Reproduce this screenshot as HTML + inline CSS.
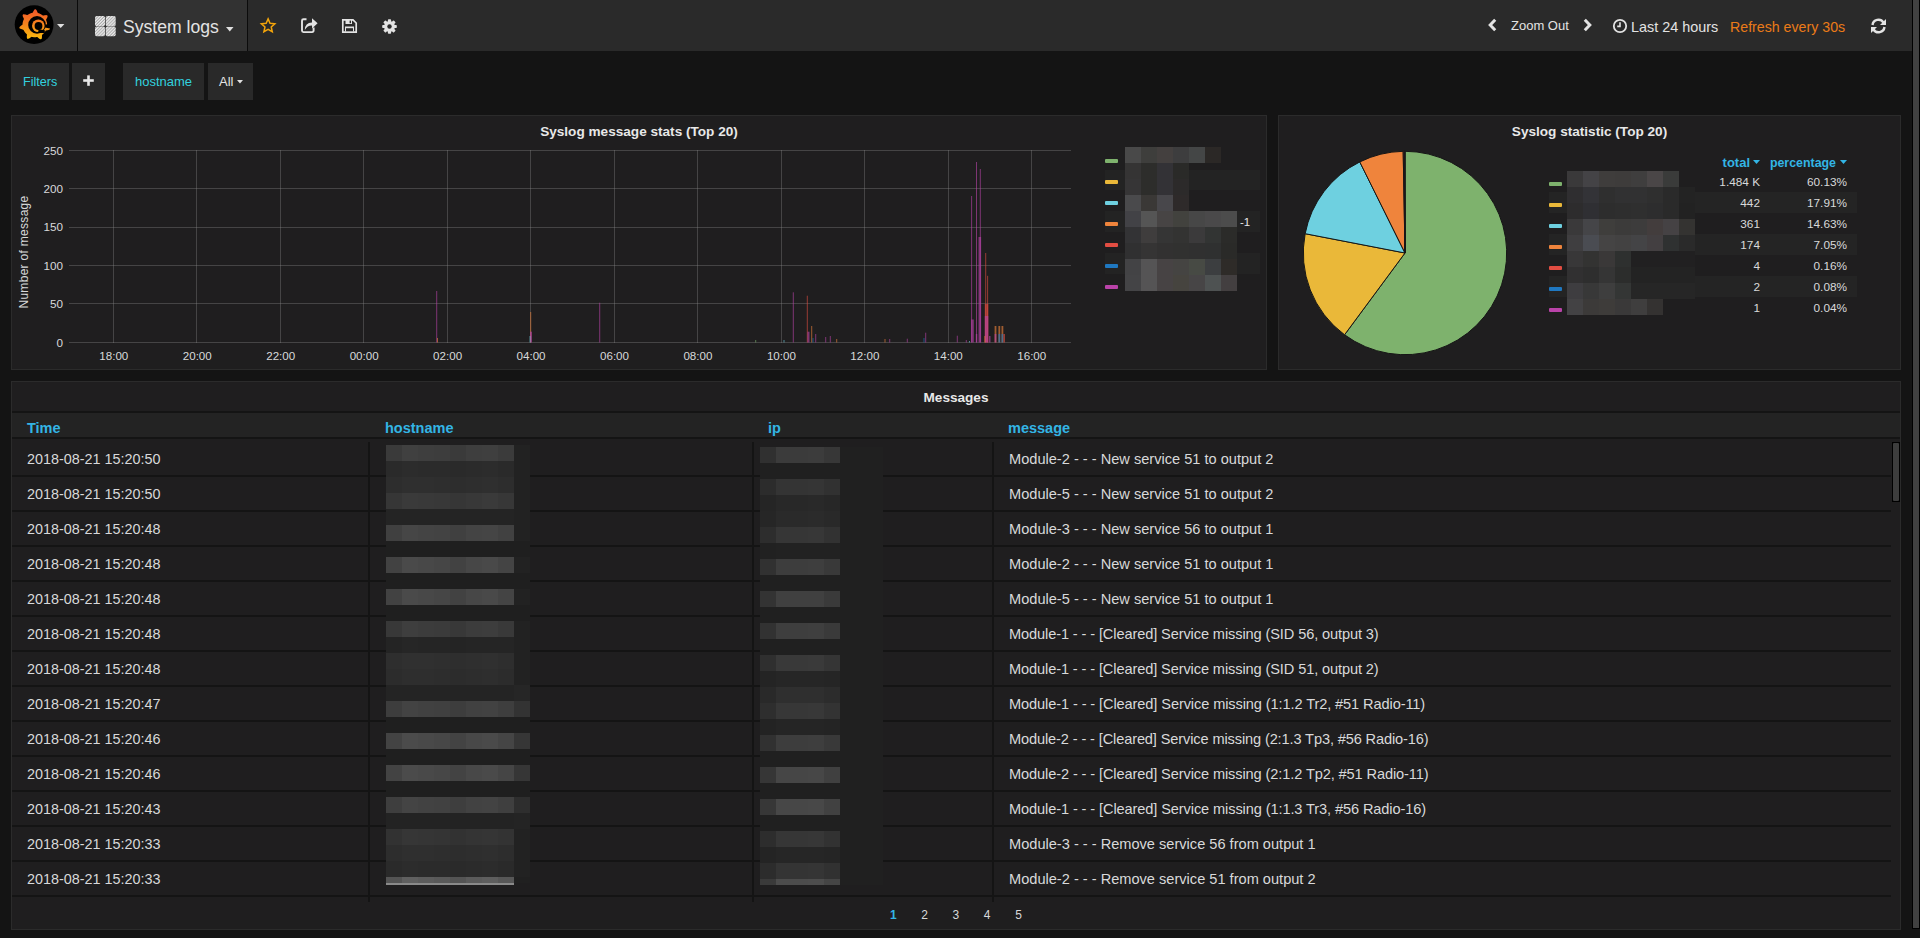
<!DOCTYPE html>
<html><head><meta charset="utf-8"><title>System logs - Grafana</title>
<style>
html,body{margin:0;padding:0;width:1920px;height:938px;overflow:hidden;background:#141414;font-family:"Liberation Sans", sans-serif;}
body>div,body>svg{position:absolute;box-sizing:content-box;}
</style></head><body>
<div style="left:0px;top:0px;width:1912px;height:51px;background:#2a2a2a;"></div>
<div style="left:0px;top:0px;width:77px;height:51px;background:#323232;"></div>
<div style="left:77px;top:0px;width:1px;height:51px;background:#0b0b0b;"></div>
<div style="left:78px;top:0px;width:169px;height:51px;background:#323232;"></div>
<div style="left:247px;top:0px;width:1px;height:51px;background:#0b0b0b;"></div>
<svg style="left:0;top:0" width="70" height="50" viewBox="0 0 70 50">
<defs><linearGradient id="lg" x1="0" y1="8" x2="0" y2="41" gradientUnits="userSpaceOnUse"><stop offset="0" stop-color="#f0512b"/><stop offset="0.45" stop-color="#f57f1e"/><stop offset="1" stop-color="#fcc30c"/></linearGradient></defs>
<circle cx="34.1" cy="24.6" r="19.4" fill="#000"/>
<polygon points="47.10,24.90 47.09,25.27 47.28,25.65 47.75,26.07 48.34,26.53 48.95,27.03 49.47,27.56 49.84,28.10 50.00,28.61 49.92,29.07 49.60,29.47 49.08,29.78 48.39,30.00 47.63,30.16 46.87,30.27 46.20,30.39 45.73,30.57 45.54,30.89 45.36,31.21 45.17,31.52 44.96,31.83 44.75,32.13 44.53,32.42 44.30,32.71 44.06,32.99 43.82,33.27 43.56,33.53 43.30,33.79 43.03,34.04 42.75,34.28 42.47,34.52 42.18,34.74 42.00,35.13 41.97,35.75 41.97,36.50 41.95,37.29 41.87,38.03 41.68,38.65 41.38,39.10 40.97,39.32 40.46,39.32 39.89,39.10 39.29,38.71 38.69,38.21 38.12,37.68 37.62,37.23 37.18,36.98 36.81,37.03 36.45,37.09 36.09,37.13 35.72,37.17 35.35,37.19 34.98,37.20 34.62,37.20 34.25,37.19 33.88,37.17 33.51,37.13 33.15,37.09 32.79,37.03 32.42,36.97 32.06,36.89 31.71,36.80 31.29,36.90 30.78,37.27 30.20,37.74 29.57,38.22 28.94,38.61 28.34,38.85 27.80,38.89 27.37,38.71 27.05,38.32 26.87,37.73 26.80,37.02 26.82,36.24 26.88,35.47 26.91,34.79 26.84,34.29 26.57,34.04 26.30,33.79 26.04,33.53 25.78,33.27 25.54,32.99 25.30,32.71 25.07,32.42 24.85,32.13 24.64,31.83 24.43,31.52 24.24,31.21 24.06,30.89 23.88,30.57 23.72,30.24 23.56,29.90 23.23,29.64 22.62,29.47 21.89,29.31 21.13,29.12 20.43,28.87 19.86,28.55 19.49,28.15 19.37,27.70 19.48,27.21 19.82,26.70 20.34,26.20 20.96,25.73 21.60,25.30 22.15,24.90 22.49,24.53 22.52,24.16 22.55,23.80 22.59,23.43 22.64,23.07 22.70,22.70 22.77,22.34 22.85,21.98 22.94,21.63 23.05,21.27 23.16,20.92 23.28,20.58 23.42,20.24 23.56,19.90 23.72,19.56 23.88,19.23 23.88,18.81 23.63,18.23 23.30,17.56 22.98,16.84 22.74,16.14 22.63,15.49 22.71,14.96 22.99,14.58 23.44,14.36 24.05,14.31 24.77,14.41 25.52,14.60 26.26,14.82 26.91,15.01 27.41,15.05 27.72,14.84 28.02,14.63 28.33,14.44 28.65,14.25 28.97,14.07 29.30,13.90 29.63,13.74 29.97,13.59 30.31,13.45 30.65,13.32 31.00,13.20 31.35,13.09 31.71,13.00 32.06,12.91 32.42,12.83 32.75,12.56 33.05,12.01 33.37,11.33 33.73,10.63 34.13,10.00 34.57,9.52 35.03,9.25 35.50,9.23 35.96,9.45 36.38,9.90 36.75,10.51 37.07,11.22 37.35,11.94 37.62,12.57 37.90,12.98 38.25,13.09 38.60,13.20 38.95,13.32 39.29,13.45 39.63,13.59 39.97,13.74 40.30,13.90 40.63,14.07 40.95,14.25 41.27,14.44 41.58,14.63 41.88,14.84 42.18,15.06 42.47,15.28 42.75,15.52 43.17,15.61 43.79,15.50 44.52,15.33 45.29,15.17 46.03,15.09 46.68,15.13 47.18,15.33 47.49,15.68 47.60,16.17 47.51,16.78 47.26,17.45 46.91,18.15 46.52,18.82 46.20,19.41 46.05,19.89 46.18,20.24 46.32,20.58 46.44,20.92 46.55,21.27 46.66,21.63 46.75,21.98 46.83,22.34 46.90,22.70 46.96,23.07 47.01,23.43 47.05,23.80 47.08,24.16 47.09,24.53" fill="url(#lg)"/>
<circle cx="37.0" cy="24.9" r="8.8" fill="#000"/>
<path d="M45.2 24.6 L50 24.2 L50 28.5 L45 27.6 Z" fill="#000"/>
<circle cx="38.3" cy="25.8" r="6.3" fill="url(#lg)"/>
<circle cx="38.5" cy="26.0" r="3.9" fill="#000"/>
<path d="M38.6 29.2 L44.8 30.2 L44.8 33 L38 33 Z" fill="#000"/>
</svg>
<svg style="left:57px;top:24px" width="8" height="5"><path d="M0 0 L7.4 0 L3.7 4 Z" fill="#e0e0e0"/></svg>
<svg style="left:94px;top:15px" width="23" height="23" viewBox="0 0 23 23">
<defs><pattern id="hatch" width="2.2" height="2.2" patternUnits="userSpaceOnUse" patternTransform="rotate(45)"><rect width="2.2" height="2.2" fill="#a9a9a9"/><rect width="1.2" height="2.2" fill="#ececec"/></pattern></defs>
<rect x="1" y="1" width="10" height="10.2" rx="1.6" fill="url(#hatch)"/>
<rect x="11.7" y="1" width="10" height="10.2" rx="1.6" fill="url(#hatch)"/>
<rect x="1" y="11.6" width="10" height="9.6" rx="1.6" fill="url(#hatch)"/>
<rect x="11.7" y="11.6" width="10" height="9.6" rx="1.6" fill="url(#hatch)"/>
</svg>
<div style="left:123px;top:17px;line-height:20px;font-size:17.6px;color:#e3e3e3;font-weight:normal;white-space:nowrap;">System logs</div>
<svg style="left:226px;top:27px" width="8" height="5"><path d="M0 0 L7.5 0 L3.75 4.5 Z" fill="#e0e0e0"/></svg>
<svg style="left:259px;top:17px" width="18" height="18" viewBox="0 0 18 18"><polygon points="9.10,1.90 11.04,6.33 15.85,6.81 12.24,10.02 13.27,14.74 9.10,12.30 4.93,14.74 5.96,10.02 2.35,6.81 7.16,6.33" fill="none" stroke="#f3a40b" stroke-width="1.5" stroke-linejoin="miter"/></svg>
<svg style="left:300px;top:17px" width="19" height="17" viewBox="0 0 19 17">
<path d="M6.5 2.3 H3.5 Q2 2.3 2 3.8 V13.6 Q2 15.1 3.5 15.1 H12 Q13.6 15.1 13.6 13.6 V10.5" fill="none" stroke="#e3e3e3" stroke-width="1.9"/>
<path d="M4.8 13 Q5 5.8 12 5.6 V1.2 L17.6 6.3 L12 11.4 V8.6 Q7.6 8.4 4.8 13 Z" fill="#e3e3e3"/>
</svg>
<svg style="left:341px;top:18px" width="17" height="16" viewBox="0 0 17 16">
<path d="M1.8 1.8 H12 L15.2 5 V14.2 H1.8 Z" fill="none" stroke="#e3e3e3" stroke-width="1.7"/>
<rect x="4.5" y="2" width="6.5" height="4" fill="#e3e3e3"/>
<rect x="8.6" y="2.6" width="1.4" height="2.6" fill="#2a2a2a"/>
<rect x="4" y="8.5" width="9" height="5" fill="#e3e3e3"/>
<rect x="5" y="10.2" width="7" height="3" fill="#2a2a2a"/>
</svg>
<svg style="left:382px;top:19px" width="15" height="15" viewBox="0 0 15 15"><rect x="5.9" y="0.2" width="3.2" height="14.6" rx="0.8" fill="#e3e3e3" transform="rotate(0 7.5 7.5)"/><rect x="5.9" y="0.2" width="3.2" height="14.6" rx="0.8" fill="#e3e3e3" transform="rotate(45 7.5 7.5)"/><rect x="5.9" y="0.2" width="3.2" height="14.6" rx="0.8" fill="#e3e3e3" transform="rotate(90 7.5 7.5)"/><rect x="5.9" y="0.2" width="3.2" height="14.6" rx="0.8" fill="#e3e3e3" transform="rotate(135 7.5 7.5)"/><circle cx="7.5" cy="7.5" r="5.4" fill="#e3e3e3"/><circle cx="7.5" cy="7.5" r="2.2" fill="#2a2a2a"/></svg>
<svg style="left:1487px;top:18px" width="11" height="14" viewBox="0 0 11 14"><path d="M8.2 1.8 L3.2 7 L8.2 12.2" fill="none" stroke="#e3e3e3" stroke-width="3"/></svg>
<div style="left:1511px;top:18px;line-height:15px;font-size:13px;color:#e3e3e3;font-weight:normal;white-space:nowrap;">Zoom Out</div>
<svg style="left:1582px;top:18px" width="11" height="14" viewBox="0 0 11 14"><path d="M2.8 1.8 L7.8 7 L2.8 12.2" fill="none" stroke="#e3e3e3" stroke-width="3"/></svg>
<svg style="left:1612px;top:18px" width="16" height="16" viewBox="0 0 16 16"><circle cx="8" cy="8" r="6.2" fill="none" stroke="#e3e3e3" stroke-width="1.8"/><path d="M8 4.2 V8.4 H5.2" fill="none" stroke="#e3e3e3" stroke-width="1.6"/></svg>
<div style="left:1631px;top:19px;line-height:16px;font-size:14.4px;color:#e3e3e3;font-weight:normal;white-space:nowrap;">Last 24 hours</div>
<div style="left:1730px;top:19px;line-height:16px;font-size:14.2px;color:#eb7b18;font-weight:normal;white-space:nowrap;">Refresh every 30s</div>
<svg style="left:1870px;top:18px" width="17" height="16" viewBox="0 0 17 16">
<path d="M2.5 7 A6 6 0 0 1 13.5 4.5" fill="none" stroke="#e3e3e3" stroke-width="2.4"/>
<path d="M16 1 V7 H10 Z" fill="#e3e3e3"/>
<path d="M14.5 9 A6 6 0 0 1 3.5 11.5" fill="none" stroke="#e3e3e3" stroke-width="2.4"/>
<path d="M1 15 V9 H7 Z" fill="#e3e3e3"/>
</svg>
<div style="left:1912px;top:0px;width:8px;height:938px;background:#141414;"></div>
<div style="left:1912px;top:0px;width:8px;height:929px;background:#000;"></div>
<div style="left:1913px;top:0px;width:6px;height:928px;background:#414141;"></div>
<div style="left:11px;top:63px;width:58px;height:37px;background:#292929;"></div>
<div style="left:23px;top:75px;line-height:14px;font-size:12.6px;color:#32d1df;font-weight:normal;white-space:nowrap;">Filters</div>
<div style="left:72px;top:63px;width:33px;height:37px;background:#292929;"></div>
<svg style="left:83px;top:75px" width="11" height="11"><rect x="0.2" y="4.2" width="10.6" height="2.6" fill="#e8e8e8"/><rect x="4.2" y="0.4" width="2.6" height="10.4" fill="#e8e8e8"/></svg>
<div style="left:123px;top:63px;width:81px;height:37px;background:#292929;"></div>
<div style="left:135px;top:74px;line-height:15px;font-size:13px;color:#32d1df;font-weight:normal;white-space:nowrap;">hostname</div>
<div style="left:208px;top:63px;width:45px;height:37px;background:#292929;"></div>
<div style="left:219px;top:74px;line-height:15px;font-size:13px;color:#e3e3e3;font-weight:normal;white-space:nowrap;">All</div>
<svg style="left:237px;top:80px" width="7" height="4"><path d="M0 0 L6 0 L3 3.5 Z" fill="#e0e0e0"/></svg>
<div style="left:11px;top:115px;width:1254px;height:253px;background:#1f1e1f;border:1px solid #2b2b2b"></div>
<div style="left:1278px;top:115px;width:621px;height:253px;background:#1f1e1f;border:1px solid #2b2b2b"></div>
<div style="left:11px;top:381px;width:1888px;height:547px;background:#1f1e1f;border:1px solid #2b2b2b"></div>
<div style="left:339px;width:600px;text-align:center;top:124px;line-height:15px;font-size:13.6px;color:#e8e8e8;font-weight:bold;white-space:nowrap;">Syslog message stats (Top 20)</div>
<svg style="left:0;top:0" width="1920" height="938"><rect x="69" y="342" width="1002" height="1" fill="rgba(136,136,136,0.37)"/><rect x="69" y="303" width="1002" height="1" fill="rgba(136,136,136,0.37)"/><rect x="69" y="265" width="1002" height="1" fill="rgba(136,136,136,0.37)"/><rect x="69" y="227" width="1002" height="1" fill="rgba(136,136,136,0.37)"/><rect x="69" y="188" width="1002" height="1" fill="rgba(136,136,136,0.37)"/><rect x="69" y="150" width="1002" height="1" fill="rgba(136,136,136,0.37)"/><rect x="113" y="150" width="1" height="193" fill="rgba(136,136,136,0.37)"/><rect x="196" y="150" width="1" height="193" fill="rgba(136,136,136,0.37)"/><rect x="280" y="150" width="1" height="193" fill="rgba(136,136,136,0.37)"/><rect x="363" y="150" width="1" height="193" fill="rgba(136,136,136,0.37)"/><rect x="447" y="150" width="1" height="193" fill="rgba(136,136,136,0.37)"/><rect x="530" y="150" width="1" height="193" fill="rgba(136,136,136,0.37)"/><rect x="614" y="150" width="1" height="193" fill="rgba(136,136,136,0.37)"/><rect x="697" y="150" width="1" height="193" fill="rgba(136,136,136,0.37)"/><rect x="781" y="150" width="1" height="193" fill="rgba(136,136,136,0.37)"/><rect x="864" y="150" width="1" height="193" fill="rgba(136,136,136,0.37)"/><rect x="948" y="150" width="1" height="193" fill="rgba(136,136,136,0.37)"/><rect x="1031" y="150" width="1" height="193" fill="rgba(136,136,136,0.37)"/><rect x="436.2" y="291.0" width="1" height="51.5" fill="#ba43a9" opacity="0.62"/><rect x="437.0" y="338.0" width="1" height="4.5" fill="#ef843c" opacity="0.62"/><rect x="530.2" y="312.0" width="1" height="30.5" fill="#ef843c" opacity="0.62"/><rect x="530.0" y="331.7" width="2" height="10.8" fill="#ba43a9" opacity="0.62"/><rect x="529.5" y="336.0" width="1" height="6.5" fill="#6ed0e0" opacity="0.62"/><rect x="599.2" y="302.7" width="1" height="39.8" fill="#ba43a9" opacity="0.62"/><rect x="755.2" y="340.0" width="1" height="2.5" fill="#7eb26d" opacity="0.62"/><rect x="783.5" y="340.0" width="1" height="2.5" fill="#6ed0e0" opacity="0.62"/><rect x="792.8" y="292.3" width="1" height="50.2" fill="#ba43a9" opacity="0.62"/><rect x="806.8" y="295.7" width="1" height="46.8" fill="#e24d42" opacity="0.62"/><rect x="807.5" y="331.7" width="2" height="10.8" fill="#ba43a9" opacity="0.62"/><rect x="811.2" y="326.0" width="1" height="16.5" fill="#ef843c" opacity="0.62"/><rect x="815.2" y="334.0" width="1" height="8.5" fill="#ba43a9" opacity="0.62"/><rect x="812.5" y="338.0" width="1" height="4.5" fill="#1f78c1" opacity="0.62"/><rect x="825.2" y="337.0" width="1" height="5.5" fill="#ba43a9" opacity="0.62"/><rect x="829.8" y="336.0" width="1" height="6.5" fill="#ba43a9" opacity="0.62"/><rect x="836.2" y="339.0" width="1" height="3.5" fill="#ef843c" opacity="0.62"/><rect x="884.5" y="339.0" width="1" height="3.5" fill="#ef843c" opacity="0.62"/><rect x="889.2" y="339.0" width="1" height="3.5" fill="#ba43a9" opacity="0.62"/><rect x="906.8" y="338.7" width="1" height="3.8" fill="#ba43a9" opacity="0.62"/><rect x="923.5" y="338.0" width="1" height="4.5" fill="#1f78c1" opacity="0.62"/><rect x="925.2" y="332.7" width="1" height="9.8" fill="#ba43a9" opacity="0.62"/><rect x="956.8" y="335.7" width="1" height="6.8" fill="#ba43a9" opacity="0.62"/><rect x="965.8" y="340.0" width="1" height="2.5" fill="#ba43a9" opacity="0.62"/><rect x="969.0" y="341.0" width="1" height="1.5" fill="#6ed0e0" opacity="0.62"/><rect x="971.2" y="319.5" width="2.6" height="23.0" fill="#ba43a9" opacity="0.62"/><rect x="971.1" y="196.0" width="1" height="146.5" fill="#ba43a9" opacity="0.62"/><rect x="976.0" y="162.0" width="1" height="180.5" fill="#ba43a9" opacity="0.62"/><rect x="975.8" y="334.0" width="1.5" height="8.5" fill="#ba43a9" opacity="0.62"/><rect x="978.5" y="237.0" width="2.6" height="105.5" fill="#ba43a9" opacity="0.62"/><rect x="979.8" y="169.0" width="1" height="173.5" fill="#ba43a9" opacity="0.62"/><rect x="985.2" y="253.0" width="1" height="89.5" fill="#e24d42" opacity="0.62"/><rect x="987.1" y="275.8" width="1" height="66.7" fill="#e24d42" opacity="0.62"/><rect x="984.8" y="304.0" width="3.5" height="38.5" fill="#e24d42" opacity="0.62"/><rect x="984.8" y="316.0" width="3.5" height="26.5" fill="#ba43a9" opacity="0.62"/><rect x="984.3" y="336.0" width="1" height="6.5" fill="#ef843c" opacity="0.62"/><rect x="989.0" y="336.0" width="1.5" height="6.5" fill="#ba43a9" opacity="0.62"/><rect x="994.6" y="326.0" width="1.8" height="16.5" fill="#ef843c" opacity="0.62"/><rect x="994.6" y="334.0" width="1.8" height="8.5" fill="#ba43a9" opacity="0.62"/><rect x="998.4" y="326.0" width="1.8" height="16.5" fill="#ef843c" opacity="0.62"/><rect x="998.4" y="334.0" width="1.8" height="8.5" fill="#1f78c1" opacity="0.62"/><rect x="1001.5" y="326.0" width="1.8" height="16.5" fill="#ef843c" opacity="0.62"/><rect x="1001.5" y="334.0" width="1.8" height="8.5" fill="#1f78c1" opacity="0.62"/><rect x="1003.4" y="334.0" width="1.6" height="8.5" fill="#e24d42" opacity="0.62"/></svg>
<div style="right:1857px;top:336px;line-height:13px;font-size:11.7px;color:#d8d9da;font-weight:normal;white-space:nowrap;">0</div>
<div style="right:1857px;top:297px;line-height:13px;font-size:11.7px;color:#d8d9da;font-weight:normal;white-space:nowrap;">50</div>
<div style="right:1857px;top:259px;line-height:13px;font-size:11.7px;color:#d8d9da;font-weight:normal;white-space:nowrap;">100</div>
<div style="right:1857px;top:220px;line-height:13px;font-size:11.7px;color:#d8d9da;font-weight:normal;white-space:nowrap;">150</div>
<div style="right:1857px;top:182px;line-height:13px;font-size:11.7px;color:#d8d9da;font-weight:normal;white-space:nowrap;">200</div>
<div style="right:1857px;top:144px;line-height:13px;font-size:11.7px;color:#d8d9da;font-weight:normal;white-space:nowrap;">250</div>
<div style="left:-186.2px;width:600px;text-align:center;top:350px;line-height:12px;font-size:11.6px;color:#d8d9da;font-weight:normal;white-space:nowrap;">18:00</div>
<div style="left:-102.75px;width:600px;text-align:center;top:350px;line-height:12px;font-size:11.6px;color:#d8d9da;font-weight:normal;white-space:nowrap;">20:00</div>
<div style="left:-19.30000000000001px;width:600px;text-align:center;top:350px;line-height:12px;font-size:11.6px;color:#d8d9da;font-weight:normal;white-space:nowrap;">22:00</div>
<div style="left:64.15000000000003px;width:600px;text-align:center;top:350px;line-height:12px;font-size:11.6px;color:#d8d9da;font-weight:normal;white-space:nowrap;">00:00</div>
<div style="left:147.60000000000002px;width:600px;text-align:center;top:350px;line-height:12px;font-size:11.6px;color:#d8d9da;font-weight:normal;white-space:nowrap;">02:00</div>
<div style="left:231.04999999999995px;width:600px;text-align:center;top:350px;line-height:12px;font-size:11.6px;color:#d8d9da;font-weight:normal;white-space:nowrap;">04:00</div>
<div style="left:314.5px;width:600px;text-align:center;top:350px;line-height:12px;font-size:11.6px;color:#d8d9da;font-weight:normal;white-space:nowrap;">06:00</div>
<div style="left:397.94999999999993px;width:600px;text-align:center;top:350px;line-height:12px;font-size:11.6px;color:#d8d9da;font-weight:normal;white-space:nowrap;">08:00</div>
<div style="left:481.4px;width:600px;text-align:center;top:350px;line-height:12px;font-size:11.6px;color:#d8d9da;font-weight:normal;white-space:nowrap;">10:00</div>
<div style="left:564.85px;width:600px;text-align:center;top:350px;line-height:12px;font-size:11.6px;color:#d8d9da;font-weight:normal;white-space:nowrap;">12:00</div>
<div style="left:648.3px;width:600px;text-align:center;top:350px;line-height:12px;font-size:11.6px;color:#d8d9da;font-weight:normal;white-space:nowrap;">14:00</div>
<div style="left:731.75px;width:600px;text-align:center;top:350px;line-height:12px;font-size:11.6px;color:#d8d9da;font-weight:normal;white-space:nowrap;">16:00</div>
<div style="left:-35.8px;top:244px;width:120px;height:16px;line-height:16px;font-size:12px;letter-spacing:0.3px;color:#d8d9da;text-align:center;transform:rotate(-90deg);white-space:nowrap">Number of message</div>
<div style="left:1105px;top:170px;width:155px;height:20px;background:#232323;"></div>
<div style="left:1105px;top:211px;width:155px;height:21px;background:#232323;"></div>
<div style="left:1105px;top:253px;width:155px;height:21px;background:#232323;"></div>
<div style="left:1105px;top:159px;width:13px;height:4px;background:#7eb26d;border-radius:1px"></div>
<div style="left:1105px;top:180px;width:13px;height:4px;background:#eab839;border-radius:1px"></div>
<div style="left:1105px;top:201px;width:13px;height:4px;background:#6ed0e0;border-radius:1px"></div>
<div style="left:1105px;top:222px;width:13px;height:4px;background:#ef843c;border-radius:1px"></div>
<div style="left:1105px;top:243px;width:13px;height:4px;background:#e24d42;border-radius:1px"></div>
<div style="left:1105px;top:264px;width:13px;height:4px;background:#1f78c1;border-radius:1px"></div>
<div style="left:1105px;top:285px;width:13px;height:4px;background:#ba43a9;border-radius:1px"></div>
<div style="left:1125px;top:147px;width:16px;height:16px;background:#494949;"></div>
<div style="left:1141px;top:147px;width:16px;height:16px;background:#3e3e3c;"></div>
<div style="left:1157px;top:147px;width:16px;height:16px;background:#44403f;"></div>
<div style="left:1173px;top:147px;width:16px;height:16px;background:#3d3d3e;"></div>
<div style="left:1189px;top:147px;width:16px;height:16px;background:#444646;"></div>
<div style="left:1205px;top:147px;width:16px;height:16px;background:#2b2826;"></div>
<div style="left:1125px;top:163px;width:16px;height:16px;background:#353434;"></div>
<div style="left:1141px;top:163px;width:16px;height:16px;background:#2d2d2b;"></div>
<div style="left:1157px;top:163px;width:16px;height:16px;background:#333236;"></div>
<div style="left:1173px;top:163px;width:16px;height:16px;background:#2a2a28;"></div>
<div style="left:1125px;top:179px;width:16px;height:16px;background:#363536;"></div>
<div style="left:1141px;top:179px;width:16px;height:16px;background:#2d2d2b;"></div>
<div style="left:1157px;top:179px;width:16px;height:16px;background:#333236;"></div>
<div style="left:1173px;top:179px;width:16px;height:16px;background:#2c2a2a;"></div>
<div style="left:1125px;top:195px;width:16px;height:16px;background:#4a4a4c;"></div>
<div style="left:1141px;top:195px;width:16px;height:16px;background:#3a3836;"></div>
<div style="left:1157px;top:195px;width:16px;height:16px;background:#48474b;"></div>
<div style="left:1173px;top:195px;width:16px;height:16px;background:#2e2a2a;"></div>
<div style="left:1125px;top:211px;width:16px;height:16px;background:#424246;"></div>
<div style="left:1141px;top:211px;width:16px;height:16px;background:#555555;"></div>
<div style="left:1157px;top:211px;width:16px;height:16px;background:#474444;"></div>
<div style="left:1173px;top:211px;width:16px;height:16px;background:#42423e;"></div>
<div style="left:1189px;top:211px;width:16px;height:16px;background:#474747;"></div>
<div style="left:1205px;top:211px;width:16px;height:16px;background:#4a494a;"></div>
<div style="left:1221px;top:211px;width:16px;height:16px;background:#4c4c4c;"></div>
<div style="left:1125px;top:227px;width:16px;height:16px;background:#333335;"></div>
<div style="left:1141px;top:227px;width:16px;height:16px;background:#3f3d3d;"></div>
<div style="left:1157px;top:227px;width:16px;height:16px;background:#353535;"></div>
<div style="left:1173px;top:227px;width:16px;height:16px;background:#333332;"></div>
<div style="left:1189px;top:227px;width:16px;height:16px;background:#3b3a3b;"></div>
<div style="left:1205px;top:227px;width:16px;height:16px;background:#323433;"></div>
<div style="left:1221px;top:227px;width:16px;height:16px;background:#2b2b29;"></div>
<div style="left:1125px;top:243px;width:16px;height:16px;background:#303031;"></div>
<div style="left:1141px;top:243px;width:16px;height:16px;background:#353434;"></div>
<div style="left:1157px;top:243px;width:16px;height:16px;background:#323131;"></div>
<div style="left:1173px;top:243px;width:16px;height:16px;background:#313130;"></div>
<div style="left:1189px;top:243px;width:16px;height:16px;background:#303030;"></div>
<div style="left:1205px;top:243px;width:16px;height:16px;background:#2f3030;"></div>
<div style="left:1221px;top:243px;width:16px;height:16px;background:#2a2a28;"></div>
<div style="left:1125px;top:259px;width:16px;height:16px;background:#434345;"></div>
<div style="left:1141px;top:259px;width:16px;height:16px;background:#555455;"></div>
<div style="left:1157px;top:259px;width:16px;height:16px;background:#474344;"></div>
<div style="left:1173px;top:259px;width:16px;height:16px;background:#454442;"></div>
<div style="left:1189px;top:259px;width:16px;height:16px;background:#474a44;"></div>
<div style="left:1205px;top:259px;width:16px;height:16px;background:#3c3e40;"></div>
<div style="left:1221px;top:259px;width:16px;height:16px;background:#2e2b28;"></div>
<div style="left:1125px;top:275px;width:16px;height:16px;background:#444446;"></div>
<div style="left:1141px;top:275px;width:16px;height:16px;background:#555455;"></div>
<div style="left:1157px;top:275px;width:16px;height:16px;background:#474344;"></div>
<div style="left:1173px;top:275px;width:16px;height:16px;background:#46443f;"></div>
<div style="left:1189px;top:275px;width:16px;height:16px;background:#474546;"></div>
<div style="left:1205px;top:275px;width:16px;height:16px;background:#4e5252;"></div>
<div style="left:1221px;top:275px;width:16px;height:16px;background:#433f40;"></div>
<div style="left:1240px;top:216px;line-height:12px;font-size:11.5px;color:#e8e8e8;font-weight:normal;white-space:nowrap;">-1</div>
<div style="left:1289.5px;width:600px;text-align:center;top:124px;line-height:15px;font-size:13.6px;color:#e8e8e8;font-weight:bold;white-space:nowrap;">Syslog statistic (Top 20)</div>
<svg style="left:1295px;top:142.5px" width="220" height="220" viewBox="1295 142.5 220 220"><path d="M1405 252.5 L1405.00 150.80 A101.7 101.7 0 1 1 1344.55 334.29 Z" fill="#7eb26d" stroke="#161616" stroke-width="1"/><path d="M1405 252.5 L1344.55 334.29 A101.7 101.7 0 0 1 1305.15 233.20 Z" fill="#eab839" stroke="#161616" stroke-width="1"/><path d="M1405 252.5 L1305.15 233.20 A101.7 101.7 0 0 1 1359.78 161.41 Z" fill="#6ed0e0" stroke="#161616" stroke-width="1"/><path d="M1405 252.5 L1359.78 161.41 A101.7 101.7 0 0 1 1403.19 150.82 Z" fill="#ef843c" stroke="#161616" stroke-width="1"/><path d="M1405 252.5 L1403.19 150.82 A101.7 101.7 0 0 1 1404.22 150.80 Z" fill="#e24d42" stroke="#161616" stroke-width="1"/><path d="M1405 252.5 L1404.22 150.80 A101.7 101.7 0 0 1 1404.74 150.80 Z" fill="#1f78c1" stroke="#161616" stroke-width="1"/><path d="M1405 252.5 L1404.74 150.80 A101.7 101.7 0 0 1 1405.00 150.80 Z" fill="#ba43a9" stroke="#161616" stroke-width="1"/></svg>
<div style="left:1549px;top:192px;width:308px;height:21px;background:#242424;"></div>
<div style="left:1549px;top:234px;width:308px;height:21px;background:#242424;"></div>
<div style="left:1549px;top:276px;width:308px;height:21px;background:#242424;"></div>
<div style="left:1549px;top:182px;width:13px;height:4px;background:#7eb26d;border-radius:1px"></div>
<div style="left:1549px;top:203px;width:13px;height:4px;background:#eab839;border-radius:1px"></div>
<div style="left:1549px;top:224px;width:13px;height:4px;background:#6ed0e0;border-radius:1px"></div>
<div style="left:1549px;top:245px;width:13px;height:4px;background:#ef843c;border-radius:1px"></div>
<div style="left:1549px;top:266px;width:13px;height:4px;background:#e24d42;border-radius:1px"></div>
<div style="left:1549px;top:287px;width:13px;height:4px;background:#1f78c1;border-radius:1px"></div>
<div style="left:1549px;top:308px;width:13px;height:4px;background:#ba43a9;border-radius:1px"></div>
<div style="right:170px;top:155px;line-height:15px;font-size:13px;color:#33b5e5;font-weight:bold;white-space:nowrap;">total</div>
<svg style="left:1753px;top:160px" width="8" height="5"><path d="M0 0 L7 0 L3.5 4 Z" fill="#33b5e5"/></svg>
<div style="right:84px;top:156px;line-height:14px;font-size:12.4px;color:#33b5e5;font-weight:bold;white-space:nowrap;">percentage</div>
<svg style="left:1840px;top:160px" width="8" height="5"><path d="M0 0 L7 0 L3.5 4 Z" fill="#33b5e5"/></svg>
<div style="right:160px;top:175px;line-height:14px;font-size:11.8px;color:#d8d9da;font-weight:normal;white-space:nowrap;">1.484 K</div>
<div style="right:73px;top:175px;line-height:14px;font-size:11.8px;color:#d8d9da;font-weight:normal;white-space:nowrap;">60.13%</div>
<div style="right:160px;top:196px;line-height:14px;font-size:11.8px;color:#d8d9da;font-weight:normal;white-space:nowrap;">442</div>
<div style="right:73px;top:196px;line-height:14px;font-size:11.8px;color:#d8d9da;font-weight:normal;white-space:nowrap;">17.91%</div>
<div style="right:160px;top:217px;line-height:14px;font-size:11.8px;color:#d8d9da;font-weight:normal;white-space:nowrap;">361</div>
<div style="right:73px;top:217px;line-height:14px;font-size:11.8px;color:#d8d9da;font-weight:normal;white-space:nowrap;">14.63%</div>
<div style="right:160px;top:238px;line-height:14px;font-size:11.8px;color:#d8d9da;font-weight:normal;white-space:nowrap;">174</div>
<div style="right:73px;top:238px;line-height:14px;font-size:11.8px;color:#d8d9da;font-weight:normal;white-space:nowrap;">7.05%</div>
<div style="right:160px;top:259px;line-height:14px;font-size:11.8px;color:#d8d9da;font-weight:normal;white-space:nowrap;">4</div>
<div style="right:73px;top:259px;line-height:14px;font-size:11.8px;color:#d8d9da;font-weight:normal;white-space:nowrap;">0.16%</div>
<div style="right:160px;top:280px;line-height:14px;font-size:11.8px;color:#d8d9da;font-weight:normal;white-space:nowrap;">2</div>
<div style="right:73px;top:280px;line-height:14px;font-size:11.8px;color:#d8d9da;font-weight:normal;white-space:nowrap;">0.08%</div>
<div style="right:160px;top:301px;line-height:14px;font-size:11.8px;color:#d8d9da;font-weight:normal;white-space:nowrap;">1</div>
<div style="right:73px;top:301px;line-height:14px;font-size:11.8px;color:#d8d9da;font-weight:normal;white-space:nowrap;">0.04%</div>
<div style="left:1567px;top:171px;width:16px;height:16px;background:#3a393a;"></div>
<div style="left:1583px;top:171px;width:16px;height:16px;background:#444346;"></div>
<div style="left:1599px;top:171px;width:16px;height:16px;background:#3f3d3c;"></div>
<div style="left:1615px;top:171px;width:16px;height:16px;background:#3e3c3b;"></div>
<div style="left:1631px;top:171px;width:16px;height:16px;background:#3f3e3e;"></div>
<div style="left:1647px;top:171px;width:16px;height:16px;background:#4a4647;"></div>
<div style="left:1663px;top:171px;width:16px;height:16px;background:#3a3b3a;"></div>
<div style="left:1567px;top:187px;width:16px;height:16px;background:#2f2e30;"></div>
<div style="left:1583px;top:187px;width:16px;height:16px;background:#333337;"></div>
<div style="left:1599px;top:187px;width:16px;height:16px;background:#2f2f2f;"></div>
<div style="left:1615px;top:187px;width:16px;height:16px;background:#313132;"></div>
<div style="left:1631px;top:187px;width:16px;height:16px;background:#313132;"></div>
<div style="left:1647px;top:187px;width:16px;height:16px;background:#2f2f2f;"></div>
<div style="left:1663px;top:187px;width:16px;height:16px;background:#2a2a2a;"></div>
<div style="left:1679px;top:187px;width:16px;height:16px;background:#232323;"></div>
<div style="left:1567px;top:203px;width:16px;height:16px;background:#2d2c2d;"></div>
<div style="left:1583px;top:203px;width:16px;height:16px;background:#2f2f33;"></div>
<div style="left:1599px;top:203px;width:16px;height:16px;background:#2d2d2d;"></div>
<div style="left:1615px;top:203px;width:16px;height:16px;background:#2e2e2e;"></div>
<div style="left:1631px;top:203px;width:16px;height:16px;background:#2f2f2f;"></div>
<div style="left:1647px;top:203px;width:16px;height:16px;background:#2d2d2e;"></div>
<div style="left:1663px;top:203px;width:16px;height:16px;background:#2a2a2a;"></div>
<div style="left:1679px;top:203px;width:16px;height:16px;background:#222222;"></div>
<div style="left:1567px;top:219px;width:16px;height:16px;background:#3a393a;"></div>
<div style="left:1583px;top:219px;width:16px;height:16px;background:#454548;"></div>
<div style="left:1599px;top:219px;width:16px;height:16px;background:#3f3e3c;"></div>
<div style="left:1615px;top:219px;width:16px;height:16px;background:#3c3b3a;"></div>
<div style="left:1631px;top:219px;width:16px;height:16px;background:#3d3c3c;"></div>
<div style="left:1647px;top:219px;width:16px;height:16px;background:#433d3d;"></div>
<div style="left:1663px;top:219px;width:16px;height:16px;background:#454244;"></div>
<div style="left:1679px;top:219px;width:16px;height:16px;background:#343331;"></div>
<div style="left:1567px;top:235px;width:16px;height:16px;background:#3f3e40;"></div>
<div style="left:1583px;top:235px;width:16px;height:16px;background:#4a4c52;"></div>
<div style="left:1599px;top:235px;width:16px;height:16px;background:#454444;"></div>
<div style="left:1615px;top:235px;width:16px;height:16px;background:#434242;"></div>
<div style="left:1631px;top:235px;width:16px;height:16px;background:#444446;"></div>
<div style="left:1647px;top:235px;width:16px;height:16px;background:#433f41;"></div>
<div style="left:1663px;top:235px;width:16px;height:16px;background:#2f3131;"></div>
<div style="left:1679px;top:235px;width:16px;height:16px;background:#2a2a2a;"></div>
<div style="left:1567px;top:251px;width:16px;height:16px;background:#383738;"></div>
<div style="left:1583px;top:251px;width:16px;height:16px;background:#333332;"></div>
<div style="left:1599px;top:251px;width:16px;height:16px;background:#3a3838;"></div>
<div style="left:1615px;top:251px;width:16px;height:16px;background:#2e302f;"></div>
<div style="left:1631px;top:251px;width:16px;height:16px;background:#212021;"></div>
<div style="left:1647px;top:251px;width:16px;height:16px;background:#212021;"></div>
<div style="left:1663px;top:251px;width:16px;height:16px;background:#212021;"></div>
<div style="left:1679px;top:251px;width:16px;height:16px;background:#212021;"></div>
<div style="left:1567px;top:267px;width:16px;height:16px;background:#313031;"></div>
<div style="left:1583px;top:267px;width:16px;height:16px;background:#2e2e2e;"></div>
<div style="left:1599px;top:267px;width:16px;height:16px;background:#353535;"></div>
<div style="left:1615px;top:267px;width:16px;height:16px;background:#2c2d2c;"></div>
<div style="left:1631px;top:267px;width:16px;height:16px;background:#232323;"></div>
<div style="left:1647px;top:267px;width:16px;height:16px;background:#232323;"></div>
<div style="left:1663px;top:267px;width:16px;height:16px;background:#232323;"></div>
<div style="left:1679px;top:267px;width:16px;height:16px;background:#232323;"></div>
<div style="left:1567px;top:283px;width:16px;height:16px;background:#3e3d40;"></div>
<div style="left:1583px;top:283px;width:16px;height:16px;background:#383838;"></div>
<div style="left:1599px;top:283px;width:16px;height:16px;background:#3e3e3e;"></div>
<div style="left:1615px;top:283px;width:16px;height:16px;background:#343635;"></div>
<div style="left:1631px;top:283px;width:16px;height:16px;background:#262626;"></div>
<div style="left:1647px;top:283px;width:16px;height:16px;background:#262626;"></div>
<div style="left:1663px;top:283px;width:16px;height:16px;background:#262626;"></div>
<div style="left:1679px;top:283px;width:16px;height:16px;background:#262626;"></div>
<div style="left:1567px;top:299px;width:16px;height:16px;background:#434244;"></div>
<div style="left:1583px;top:299px;width:16px;height:16px;background:#3c3a39;"></div>
<div style="left:1599px;top:299px;width:16px;height:16px;background:#3e3c3a;"></div>
<div style="left:1615px;top:299px;width:16px;height:16px;background:#3a3939;"></div>
<div style="left:1631px;top:299px;width:16px;height:16px;background:#3f3e3e;"></div>
<div style="left:1647px;top:299px;width:16px;height:16px;background:#343231;"></div>
<div style="left:656px;width:600px;text-align:center;top:390px;line-height:15px;font-size:13.6px;color:#e8e8e8;font-weight:bold;white-space:nowrap;">Messages</div>
<div style="left:12px;top:411px;width:1888px;height:2px;background:#141414;"></div>
<div style="left:12px;top:413px;width:1888px;height:24px;background:#232323;"></div>
<div style="left:12px;top:437px;width:1888px;height:2px;background:#141414;"></div>
<div style="left:27px;top:420px;line-height:16px;font-size:14.5px;color:#33b5e5;font-weight:bold;white-space:nowrap;">Time</div>
<div style="left:385px;top:420px;line-height:16px;font-size:14.5px;color:#33b5e5;font-weight:bold;white-space:nowrap;">hostname</div>
<div style="left:768px;top:420px;line-height:16px;font-size:14.5px;color:#33b5e5;font-weight:bold;white-space:nowrap;">ip</div>
<div style="left:1008px;top:420px;line-height:16px;font-size:14.5px;color:#33b5e5;font-weight:bold;white-space:nowrap;">message</div>
<div style="left:12px;top:475px;width:1879px;height:2px;background:#141414;"></div>
<div style="left:12px;top:510px;width:1879px;height:2px;background:#141414;"></div>
<div style="left:12px;top:545px;width:1879px;height:2px;background:#141414;"></div>
<div style="left:12px;top:580px;width:1879px;height:2px;background:#141414;"></div>
<div style="left:12px;top:615px;width:1879px;height:2px;background:#141414;"></div>
<div style="left:12px;top:650px;width:1879px;height:2px;background:#141414;"></div>
<div style="left:12px;top:685px;width:1879px;height:2px;background:#141414;"></div>
<div style="left:12px;top:720px;width:1879px;height:2px;background:#141414;"></div>
<div style="left:12px;top:755px;width:1879px;height:2px;background:#141414;"></div>
<div style="left:12px;top:790px;width:1879px;height:2px;background:#141414;"></div>
<div style="left:12px;top:825px;width:1879px;height:2px;background:#141414;"></div>
<div style="left:12px;top:860px;width:1879px;height:2px;background:#141414;"></div>
<div style="left:12px;top:895px;width:1879px;height:2px;background:#141414;"></div>
<div style="left:368px;top:442px;width:2px;height:460px;background:#141414;"></div>
<div style="left:752px;top:442px;width:2px;height:460px;background:#141414;"></div>
<div style="left:992px;top:442px;width:2px;height:460px;background:#141414;"></div>
<div style="left:386px;top:445px;width:16px;height:16px;background:#3a3a3a;"></div>
<div style="left:402px;top:445px;width:16px;height:16px;background:#404040;"></div>
<div style="left:418px;top:445px;width:16px;height:16px;background:#3e3e3e;"></div>
<div style="left:434px;top:445px;width:16px;height:16px;background:#3d3d3d;"></div>
<div style="left:450px;top:445px;width:16px;height:16px;background:#3a3a3a;"></div>
<div style="left:466px;top:445px;width:16px;height:16px;background:#3e3e3e;"></div>
<div style="left:482px;top:445px;width:16px;height:16px;background:#3f3f3f;"></div>
<div style="left:498px;top:445px;width:16px;height:16px;background:#3b3b3b;"></div>
<div style="left:514px;top:445px;width:16px;height:16px;background:#222222;"></div>
<div style="left:386px;top:461px;width:16px;height:16px;background:#2a2a2a;"></div>
<div style="left:402px;top:461px;width:16px;height:16px;background:#2c2c2c;"></div>
<div style="left:418px;top:461px;width:16px;height:16px;background:#2b2b2b;"></div>
<div style="left:434px;top:461px;width:16px;height:16px;background:#2b2b2b;"></div>
<div style="left:450px;top:461px;width:16px;height:16px;background:#2a2a2a;"></div>
<div style="left:466px;top:461px;width:16px;height:16px;background:#2b2b2b;"></div>
<div style="left:482px;top:461px;width:16px;height:16px;background:#2c2c2c;"></div>
<div style="left:498px;top:461px;width:16px;height:16px;background:#2a2a2a;"></div>
<div style="left:514px;top:461px;width:16px;height:16px;background:#222222;"></div>
<div style="left:386px;top:477px;width:16px;height:16px;background:#2d2d2d;"></div>
<div style="left:402px;top:477px;width:16px;height:16px;background:#2f2f2f;"></div>
<div style="left:418px;top:477px;width:16px;height:16px;background:#2f2f2f;"></div>
<div style="left:434px;top:477px;width:16px;height:16px;background:#2e2e2e;"></div>
<div style="left:450px;top:477px;width:16px;height:16px;background:#2d2d2d;"></div>
<div style="left:466px;top:477px;width:16px;height:16px;background:#2e2e2e;"></div>
<div style="left:482px;top:477px;width:16px;height:16px;background:#2f2f2f;"></div>
<div style="left:498px;top:477px;width:16px;height:16px;background:#2d2d2d;"></div>
<div style="left:514px;top:477px;width:16px;height:16px;background:#222222;"></div>
<div style="left:386px;top:493px;width:16px;height:16px;background:#363636;"></div>
<div style="left:402px;top:493px;width:16px;height:16px;background:#3a3a3a;"></div>
<div style="left:418px;top:493px;width:16px;height:16px;background:#393939;"></div>
<div style="left:434px;top:493px;width:16px;height:16px;background:#383838;"></div>
<div style="left:450px;top:493px;width:16px;height:16px;background:#363636;"></div>
<div style="left:466px;top:493px;width:16px;height:16px;background:#383838;"></div>
<div style="left:482px;top:493px;width:16px;height:16px;background:#3a3a3a;"></div>
<div style="left:498px;top:493px;width:16px;height:16px;background:#373737;"></div>
<div style="left:514px;top:493px;width:16px;height:16px;background:#222222;"></div>
<div style="left:386px;top:509px;width:16px;height:16px;background:#242424;"></div>
<div style="left:402px;top:509px;width:16px;height:16px;background:#242424;"></div>
<div style="left:418px;top:509px;width:16px;height:16px;background:#242424;"></div>
<div style="left:434px;top:509px;width:16px;height:16px;background:#242424;"></div>
<div style="left:450px;top:509px;width:16px;height:16px;background:#242424;"></div>
<div style="left:466px;top:509px;width:16px;height:16px;background:#242424;"></div>
<div style="left:482px;top:509px;width:16px;height:16px;background:#242424;"></div>
<div style="left:498px;top:509px;width:16px;height:16px;background:#242424;"></div>
<div style="left:514px;top:509px;width:16px;height:16px;background:#222222;"></div>
<div style="left:386px;top:525px;width:16px;height:16px;background:#404040;"></div>
<div style="left:402px;top:525px;width:16px;height:16px;background:#464646;"></div>
<div style="left:418px;top:525px;width:16px;height:16px;background:#444444;"></div>
<div style="left:434px;top:525px;width:16px;height:16px;background:#434343;"></div>
<div style="left:450px;top:525px;width:16px;height:16px;background:#404040;"></div>
<div style="left:466px;top:525px;width:16px;height:16px;background:#444444;"></div>
<div style="left:482px;top:525px;width:16px;height:16px;background:#454545;"></div>
<div style="left:498px;top:525px;width:16px;height:16px;background:#414141;"></div>
<div style="left:514px;top:525px;width:16px;height:16px;background:#222222;"></div>
<div style="left:386px;top:541px;width:144px;height:16px;background:#1f1f1f;"></div>
<div style="left:386px;top:557px;width:16px;height:16px;background:#424242;"></div>
<div style="left:402px;top:557px;width:16px;height:16px;background:#4a4a4a;"></div>
<div style="left:418px;top:557px;width:16px;height:16px;background:#484848;"></div>
<div style="left:434px;top:557px;width:16px;height:16px;background:#464646;"></div>
<div style="left:450px;top:557px;width:16px;height:16px;background:#424242;"></div>
<div style="left:466px;top:557px;width:16px;height:16px;background:#474747;"></div>
<div style="left:482px;top:557px;width:16px;height:16px;background:#494949;"></div>
<div style="left:498px;top:557px;width:16px;height:16px;background:#444444;"></div>
<div style="left:514px;top:557px;width:16px;height:16px;background:#222222;"></div>
<div style="left:386px;top:573px;width:144px;height:16px;background:#1f1f1f;"></div>
<div style="left:386px;top:589px;width:16px;height:16px;background:#424242;"></div>
<div style="left:402px;top:589px;width:16px;height:16px;background:#4a4a4a;"></div>
<div style="left:418px;top:589px;width:16px;height:16px;background:#484848;"></div>
<div style="left:434px;top:589px;width:16px;height:16px;background:#464646;"></div>
<div style="left:450px;top:589px;width:16px;height:16px;background:#424242;"></div>
<div style="left:466px;top:589px;width:16px;height:16px;background:#474747;"></div>
<div style="left:482px;top:589px;width:16px;height:16px;background:#494949;"></div>
<div style="left:498px;top:589px;width:16px;height:16px;background:#444444;"></div>
<div style="left:514px;top:589px;width:16px;height:16px;background:#222222;"></div>
<div style="left:386px;top:605px;width:144px;height:16px;background:#1f1f1f;"></div>
<div style="left:386px;top:621px;width:16px;height:16px;background:#383838;"></div>
<div style="left:402px;top:621px;width:16px;height:16px;background:#3e3e3e;"></div>
<div style="left:418px;top:621px;width:16px;height:16px;background:#3c3c3c;"></div>
<div style="left:434px;top:621px;width:16px;height:16px;background:#3b3b3b;"></div>
<div style="left:450px;top:621px;width:16px;height:16px;background:#383838;"></div>
<div style="left:466px;top:621px;width:16px;height:16px;background:#3c3c3c;"></div>
<div style="left:482px;top:621px;width:16px;height:16px;background:#3d3d3d;"></div>
<div style="left:498px;top:621px;width:16px;height:16px;background:#393939;"></div>
<div style="left:514px;top:621px;width:16px;height:16px;background:#222222;"></div>
<div style="left:386px;top:637px;width:16px;height:16px;background:#242424;"></div>
<div style="left:402px;top:637px;width:16px;height:16px;background:#262626;"></div>
<div style="left:418px;top:637px;width:16px;height:16px;background:#252525;"></div>
<div style="left:434px;top:637px;width:16px;height:16px;background:#252525;"></div>
<div style="left:450px;top:637px;width:16px;height:16px;background:#242424;"></div>
<div style="left:466px;top:637px;width:16px;height:16px;background:#252525;"></div>
<div style="left:482px;top:637px;width:16px;height:16px;background:#252525;"></div>
<div style="left:498px;top:637px;width:16px;height:16px;background:#252525;"></div>
<div style="left:514px;top:637px;width:16px;height:16px;background:#222222;"></div>
<div style="left:386px;top:653px;width:16px;height:16px;background:#2e2e2e;"></div>
<div style="left:402px;top:653px;width:16px;height:16px;background:#303030;"></div>
<div style="left:418px;top:653px;width:16px;height:16px;background:#303030;"></div>
<div style="left:434px;top:653px;width:16px;height:16px;background:#2f2f2f;"></div>
<div style="left:450px;top:653px;width:16px;height:16px;background:#2e2e2e;"></div>
<div style="left:466px;top:653px;width:16px;height:16px;background:#2f2f2f;"></div>
<div style="left:482px;top:653px;width:16px;height:16px;background:#303030;"></div>
<div style="left:498px;top:653px;width:16px;height:16px;background:#2e2e2e;"></div>
<div style="left:514px;top:653px;width:16px;height:16px;background:#222222;"></div>
<div style="left:386px;top:669px;width:16px;height:16px;background:#2c2c2c;"></div>
<div style="left:402px;top:669px;width:16px;height:16px;background:#2e2e2e;"></div>
<div style="left:418px;top:669px;width:16px;height:16px;background:#2e2e2e;"></div>
<div style="left:434px;top:669px;width:16px;height:16px;background:#2d2d2d;"></div>
<div style="left:450px;top:669px;width:16px;height:16px;background:#2c2c2c;"></div>
<div style="left:466px;top:669px;width:16px;height:16px;background:#2d2d2d;"></div>
<div style="left:482px;top:669px;width:16px;height:16px;background:#2e2e2e;"></div>
<div style="left:498px;top:669px;width:16px;height:16px;background:#2c2c2c;"></div>
<div style="left:514px;top:669px;width:16px;height:16px;background:#222222;"></div>
<div style="left:386px;top:685px;width:16px;height:16px;background:#242424;"></div>
<div style="left:402px;top:685px;width:16px;height:16px;background:#242424;"></div>
<div style="left:418px;top:685px;width:16px;height:16px;background:#242424;"></div>
<div style="left:434px;top:685px;width:16px;height:16px;background:#242424;"></div>
<div style="left:450px;top:685px;width:16px;height:16px;background:#242424;"></div>
<div style="left:466px;top:685px;width:16px;height:16px;background:#242424;"></div>
<div style="left:482px;top:685px;width:16px;height:16px;background:#242424;"></div>
<div style="left:498px;top:685px;width:16px;height:16px;background:#242424;"></div>
<div style="left:514px;top:685px;width:16px;height:16px;background:#262626;"></div>
<div style="left:386px;top:701px;width:16px;height:16px;background:#3d3d3d;"></div>
<div style="left:402px;top:701px;width:16px;height:16px;background:#434343;"></div>
<div style="left:418px;top:701px;width:16px;height:16px;background:#414141;"></div>
<div style="left:434px;top:701px;width:16px;height:16px;background:#404040;"></div>
<div style="left:450px;top:701px;width:16px;height:16px;background:#3d3d3d;"></div>
<div style="left:466px;top:701px;width:16px;height:16px;background:#414141;"></div>
<div style="left:482px;top:701px;width:16px;height:16px;background:#424242;"></div>
<div style="left:498px;top:701px;width:16px;height:16px;background:#3e3e3e;"></div>
<div style="left:514px;top:701px;width:16px;height:16px;background:#333333;"></div>
<div style="left:386px;top:717px;width:144px;height:16px;background:#1f1f1f;"></div>
<div style="left:386px;top:733px;width:16px;height:16px;background:#434343;"></div>
<div style="left:402px;top:733px;width:16px;height:16px;background:#4b4b4b;"></div>
<div style="left:418px;top:733px;width:16px;height:16px;background:#494949;"></div>
<div style="left:434px;top:733px;width:16px;height:16px;background:#474747;"></div>
<div style="left:450px;top:733px;width:16px;height:16px;background:#434343;"></div>
<div style="left:466px;top:733px;width:16px;height:16px;background:#484848;"></div>
<div style="left:482px;top:733px;width:16px;height:16px;background:#4a4a4a;"></div>
<div style="left:498px;top:733px;width:16px;height:16px;background:#454545;"></div>
<div style="left:514px;top:733px;width:16px;height:16px;background:#363636;"></div>
<div style="left:386px;top:749px;width:144px;height:16px;background:#1f1f1f;"></div>
<div style="left:386px;top:765px;width:16px;height:16px;background:#434343;"></div>
<div style="left:402px;top:765px;width:16px;height:16px;background:#4b4b4b;"></div>
<div style="left:418px;top:765px;width:16px;height:16px;background:#494949;"></div>
<div style="left:434px;top:765px;width:16px;height:16px;background:#474747;"></div>
<div style="left:450px;top:765px;width:16px;height:16px;background:#434343;"></div>
<div style="left:466px;top:765px;width:16px;height:16px;background:#484848;"></div>
<div style="left:482px;top:765px;width:16px;height:16px;background:#4a4a4a;"></div>
<div style="left:498px;top:765px;width:16px;height:16px;background:#454545;"></div>
<div style="left:514px;top:765px;width:16px;height:16px;background:#363636;"></div>
<div style="left:386px;top:781px;width:144px;height:16px;background:#1f1f1f;"></div>
<div style="left:386px;top:797px;width:16px;height:16px;background:#3e3e3e;"></div>
<div style="left:402px;top:797px;width:16px;height:16px;background:#444444;"></div>
<div style="left:418px;top:797px;width:16px;height:16px;background:#424242;"></div>
<div style="left:434px;top:797px;width:16px;height:16px;background:#414141;"></div>
<div style="left:450px;top:797px;width:16px;height:16px;background:#3e3e3e;"></div>
<div style="left:466px;top:797px;width:16px;height:16px;background:#424242;"></div>
<div style="left:482px;top:797px;width:16px;height:16px;background:#434343;"></div>
<div style="left:498px;top:797px;width:16px;height:16px;background:#3f3f3f;"></div>
<div style="left:514px;top:797px;width:16px;height:16px;background:#2e2e2e;"></div>
<div style="left:386px;top:813px;width:16px;height:16px;background:#232323;"></div>
<div style="left:402px;top:813px;width:16px;height:16px;background:#232323;"></div>
<div style="left:418px;top:813px;width:16px;height:16px;background:#232323;"></div>
<div style="left:434px;top:813px;width:16px;height:16px;background:#232323;"></div>
<div style="left:450px;top:813px;width:16px;height:16px;background:#232323;"></div>
<div style="left:466px;top:813px;width:16px;height:16px;background:#232323;"></div>
<div style="left:482px;top:813px;width:16px;height:16px;background:#232323;"></div>
<div style="left:498px;top:813px;width:16px;height:16px;background:#232323;"></div>
<div style="left:514px;top:813px;width:16px;height:16px;background:#242424;"></div>
<div style="left:386px;top:829px;width:16px;height:16px;background:#323232;"></div>
<div style="left:402px;top:829px;width:16px;height:16px;background:#363636;"></div>
<div style="left:418px;top:829px;width:16px;height:16px;background:#353535;"></div>
<div style="left:434px;top:829px;width:16px;height:16px;background:#343434;"></div>
<div style="left:450px;top:829px;width:16px;height:16px;background:#323232;"></div>
<div style="left:466px;top:829px;width:16px;height:16px;background:#343434;"></div>
<div style="left:482px;top:829px;width:16px;height:16px;background:#353535;"></div>
<div style="left:498px;top:829px;width:16px;height:16px;background:#333333;"></div>
<div style="left:514px;top:829px;width:16px;height:16px;background:#222222;"></div>
<div style="left:386px;top:845px;width:16px;height:16px;background:#2d2d2d;"></div>
<div style="left:402px;top:845px;width:16px;height:16px;background:#2f2f2f;"></div>
<div style="left:418px;top:845px;width:16px;height:16px;background:#2f2f2f;"></div>
<div style="left:434px;top:845px;width:16px;height:16px;background:#2e2e2e;"></div>
<div style="left:450px;top:845px;width:16px;height:16px;background:#2d2d2d;"></div>
<div style="left:466px;top:845px;width:16px;height:16px;background:#2e2e2e;"></div>
<div style="left:482px;top:845px;width:16px;height:16px;background:#2f2f2f;"></div>
<div style="left:498px;top:845px;width:16px;height:16px;background:#2d2d2d;"></div>
<div style="left:514px;top:845px;width:16px;height:16px;background:#222222;"></div>
<div style="left:386px;top:861px;width:16px;height:16px;background:#2a2a2a;"></div>
<div style="left:402px;top:861px;width:16px;height:16px;background:#2c2c2c;"></div>
<div style="left:418px;top:861px;width:16px;height:16px;background:#2b2b2b;"></div>
<div style="left:434px;top:861px;width:16px;height:16px;background:#2b2b2b;"></div>
<div style="left:450px;top:861px;width:16px;height:16px;background:#2a2a2a;"></div>
<div style="left:466px;top:861px;width:16px;height:16px;background:#2b2b2b;"></div>
<div style="left:482px;top:861px;width:16px;height:16px;background:#2c2c2c;"></div>
<div style="left:498px;top:861px;width:16px;height:16px;background:#2a2a2a;"></div>
<div style="left:514px;top:861px;width:16px;height:16px;background:#222222;"></div>
<div style="left:386px;top:877px;width:16px;height:6px;background:#545454;"></div>
<div style="left:402px;top:877px;width:16px;height:6px;background:#606060;"></div>
<div style="left:418px;top:877px;width:16px;height:6px;background:#5c5c5c;"></div>
<div style="left:434px;top:877px;width:16px;height:6px;background:#595959;"></div>
<div style="left:450px;top:877px;width:16px;height:6px;background:#545454;"></div>
<div style="left:466px;top:877px;width:16px;height:6px;background:#5b5b5b;"></div>
<div style="left:482px;top:877px;width:16px;height:6px;background:#5e5e5e;"></div>
<div style="left:498px;top:877px;width:16px;height:6px;background:#575757;"></div>
<div style="left:514px;top:877px;width:16px;height:6px;background:#202020;"></div>
<div style="left:386px;top:883px;width:128px;height:2px;background:#8a8a8a;"></div>
<div style="left:760px;top:447px;width:123px;height:16px;background:#202020;"></div>
<div style="left:760px;top:447px;width:16px;height:16px;background:#303030;"></div>
<div style="left:776px;top:447px;width:16px;height:16px;background:#3b3b3b;"></div>
<div style="left:792px;top:447px;width:16px;height:16px;background:#3b3b3b;"></div>
<div style="left:808px;top:447px;width:16px;height:16px;background:#3c3c3c;"></div>
<div style="left:824px;top:447px;width:16px;height:16px;background:#373737;"></div>
<div style="left:760px;top:463px;width:123px;height:16px;background:#202020;"></div>
<div style="left:760px;top:479px;width:123px;height:16px;background:#202020;"></div>
<div style="left:760px;top:479px;width:16px;height:16px;background:#2c2c2c;"></div>
<div style="left:776px;top:479px;width:16px;height:16px;background:#343434;"></div>
<div style="left:792px;top:479px;width:16px;height:16px;background:#343434;"></div>
<div style="left:808px;top:479px;width:16px;height:16px;background:#353535;"></div>
<div style="left:824px;top:479px;width:16px;height:16px;background:#313131;"></div>
<div style="left:760px;top:495px;width:123px;height:16px;background:#202020;"></div>
<div style="left:760px;top:495px;width:16px;height:16px;background:#252525;"></div>
<div style="left:776px;top:495px;width:16px;height:16px;background:#282828;"></div>
<div style="left:792px;top:495px;width:16px;height:16px;background:#282828;"></div>
<div style="left:808px;top:495px;width:16px;height:16px;background:#292929;"></div>
<div style="left:824px;top:495px;width:16px;height:16px;background:#272727;"></div>
<div style="left:760px;top:511px;width:123px;height:16px;background:#202020;"></div>
<div style="left:760px;top:511px;width:16px;height:16px;background:#262626;"></div>
<div style="left:776px;top:511px;width:16px;height:16px;background:#2a2a2a;"></div>
<div style="left:792px;top:511px;width:16px;height:16px;background:#2a2a2a;"></div>
<div style="left:808px;top:511px;width:16px;height:16px;background:#2b2b2b;"></div>
<div style="left:824px;top:511px;width:16px;height:16px;background:#292929;"></div>
<div style="left:760px;top:527px;width:123px;height:16px;background:#202020;"></div>
<div style="left:760px;top:527px;width:16px;height:16px;background:#2d2d2d;"></div>
<div style="left:776px;top:527px;width:16px;height:16px;background:#363636;"></div>
<div style="left:792px;top:527px;width:16px;height:16px;background:#363636;"></div>
<div style="left:808px;top:527px;width:16px;height:16px;background:#373737;"></div>
<div style="left:824px;top:527px;width:16px;height:16px;background:#323232;"></div>
<div style="left:760px;top:543px;width:123px;height:16px;background:#202020;"></div>
<div style="left:760px;top:543px;width:16px;height:16px;background:#212121;"></div>
<div style="left:776px;top:543px;width:16px;height:16px;background:#222222;"></div>
<div style="left:792px;top:543px;width:16px;height:16px;background:#222222;"></div>
<div style="left:808px;top:543px;width:16px;height:16px;background:#222222;"></div>
<div style="left:824px;top:543px;width:16px;height:16px;background:#222222;"></div>
<div style="left:760px;top:559px;width:123px;height:16px;background:#202020;"></div>
<div style="left:760px;top:559px;width:16px;height:16px;background:#313131;"></div>
<div style="left:776px;top:559px;width:16px;height:16px;background:#3d3d3d;"></div>
<div style="left:792px;top:559px;width:16px;height:16px;background:#3d3d3d;"></div>
<div style="left:808px;top:559px;width:16px;height:16px;background:#3e3e3e;"></div>
<div style="left:824px;top:559px;width:16px;height:16px;background:#393939;"></div>
<div style="left:760px;top:575px;width:123px;height:16px;background:#202020;"></div>
<div style="left:760px;top:591px;width:123px;height:16px;background:#202020;"></div>
<div style="left:760px;top:591px;width:16px;height:16px;background:#333333;"></div>
<div style="left:776px;top:591px;width:16px;height:16px;background:#404040;"></div>
<div style="left:792px;top:591px;width:16px;height:16px;background:#404040;"></div>
<div style="left:808px;top:591px;width:16px;height:16px;background:#404040;"></div>
<div style="left:824px;top:591px;width:16px;height:16px;background:#3a3a3a;"></div>
<div style="left:760px;top:607px;width:123px;height:16px;background:#202020;"></div>
<div style="left:760px;top:623px;width:123px;height:16px;background:#202020;"></div>
<div style="left:760px;top:623px;width:16px;height:16px;background:#323232;"></div>
<div style="left:776px;top:623px;width:16px;height:16px;background:#3e3e3e;"></div>
<div style="left:792px;top:623px;width:16px;height:16px;background:#3e3e3e;"></div>
<div style="left:808px;top:623px;width:16px;height:16px;background:#3f3f3f;"></div>
<div style="left:824px;top:623px;width:16px;height:16px;background:#3a3a3a;"></div>
<div style="left:760px;top:639px;width:123px;height:16px;background:#202020;"></div>
<div style="left:760px;top:655px;width:123px;height:16px;background:#202020;"></div>
<div style="left:760px;top:655px;width:16px;height:16px;background:#2f2f2f;"></div>
<div style="left:776px;top:655px;width:16px;height:16px;background:#393939;"></div>
<div style="left:792px;top:655px;width:16px;height:16px;background:#393939;"></div>
<div style="left:808px;top:655px;width:16px;height:16px;background:#3a3a3a;"></div>
<div style="left:824px;top:655px;width:16px;height:16px;background:#353535;"></div>
<div style="left:760px;top:671px;width:123px;height:16px;background:#202020;"></div>
<div style="left:760px;top:671px;width:16px;height:16px;background:#242424;"></div>
<div style="left:776px;top:671px;width:16px;height:16px;background:#262626;"></div>
<div style="left:792px;top:671px;width:16px;height:16px;background:#262626;"></div>
<div style="left:808px;top:671px;width:16px;height:16px;background:#262626;"></div>
<div style="left:824px;top:671px;width:16px;height:16px;background:#252525;"></div>
<div style="left:760px;top:687px;width:123px;height:16px;background:#202020;"></div>
<div style="left:760px;top:687px;width:16px;height:16px;background:#292929;"></div>
<div style="left:776px;top:687px;width:16px;height:16px;background:#2f2f2f;"></div>
<div style="left:792px;top:687px;width:16px;height:16px;background:#2f2f2f;"></div>
<div style="left:808px;top:687px;width:16px;height:16px;background:#2f2f2f;"></div>
<div style="left:824px;top:687px;width:16px;height:16px;background:#2c2c2c;"></div>
<div style="left:760px;top:703px;width:123px;height:16px;background:#202020;"></div>
<div style="left:760px;top:703px;width:16px;height:16px;background:#2e2e2e;"></div>
<div style="left:776px;top:703px;width:16px;height:16px;background:#373737;"></div>
<div style="left:792px;top:703px;width:16px;height:16px;background:#373737;"></div>
<div style="left:808px;top:703px;width:16px;height:16px;background:#383838;"></div>
<div style="left:824px;top:703px;width:16px;height:16px;background:#333333;"></div>
<div style="left:760px;top:719px;width:123px;height:16px;background:#202020;"></div>
<div style="left:760px;top:719px;width:16px;height:16px;background:#232323;"></div>
<div style="left:776px;top:719px;width:16px;height:16px;background:#252525;"></div>
<div style="left:792px;top:719px;width:16px;height:16px;background:#252525;"></div>
<div style="left:808px;top:719px;width:16px;height:16px;background:#252525;"></div>
<div style="left:824px;top:719px;width:16px;height:16px;background:#242424;"></div>
<div style="left:760px;top:735px;width:123px;height:16px;background:#202020;"></div>
<div style="left:760px;top:735px;width:16px;height:16px;background:#313131;"></div>
<div style="left:776px;top:735px;width:16px;height:16px;background:#3d3d3d;"></div>
<div style="left:792px;top:735px;width:16px;height:16px;background:#3d3d3d;"></div>
<div style="left:808px;top:735px;width:16px;height:16px;background:#3e3e3e;"></div>
<div style="left:824px;top:735px;width:16px;height:16px;background:#393939;"></div>
<div style="left:760px;top:751px;width:123px;height:16px;background:#202020;"></div>
<div style="left:760px;top:767px;width:123px;height:16px;background:#202020;"></div>
<div style="left:760px;top:767px;width:16px;height:16px;background:#363636;"></div>
<div style="left:776px;top:767px;width:16px;height:16px;background:#464646;"></div>
<div style="left:792px;top:767px;width:16px;height:16px;background:#464646;"></div>
<div style="left:808px;top:767px;width:16px;height:16px;background:#474747;"></div>
<div style="left:824px;top:767px;width:16px;height:16px;background:#404040;"></div>
<div style="left:760px;top:783px;width:123px;height:16px;background:#202020;"></div>
<div style="left:760px;top:799px;width:123px;height:16px;background:#202020;"></div>
<div style="left:760px;top:799px;width:16px;height:16px;background:#373737;"></div>
<div style="left:776px;top:799px;width:16px;height:16px;background:#474747;"></div>
<div style="left:792px;top:799px;width:16px;height:16px;background:#474747;"></div>
<div style="left:808px;top:799px;width:16px;height:16px;background:#484848;"></div>
<div style="left:824px;top:799px;width:16px;height:16px;background:#414141;"></div>
<div style="left:760px;top:815px;width:123px;height:16px;background:#202020;"></div>
<div style="left:760px;top:831px;width:123px;height:16px;background:#202020;"></div>
<div style="left:760px;top:831px;width:16px;height:16px;background:#2d2d2d;"></div>
<div style="left:776px;top:831px;width:16px;height:16px;background:#363636;"></div>
<div style="left:792px;top:831px;width:16px;height:16px;background:#363636;"></div>
<div style="left:808px;top:831px;width:16px;height:16px;background:#373737;"></div>
<div style="left:824px;top:831px;width:16px;height:16px;background:#323232;"></div>
<div style="left:760px;top:847px;width:123px;height:16px;background:#202020;"></div>
<div style="left:760px;top:847px;width:16px;height:16px;background:#242424;"></div>
<div style="left:776px;top:847px;width:16px;height:16px;background:#262626;"></div>
<div style="left:792px;top:847px;width:16px;height:16px;background:#262626;"></div>
<div style="left:808px;top:847px;width:16px;height:16px;background:#262626;"></div>
<div style="left:824px;top:847px;width:16px;height:16px;background:#252525;"></div>
<div style="left:760px;top:863px;width:123px;height:16px;background:#202020;"></div>
<div style="left:760px;top:863px;width:16px;height:16px;background:#2c2c2c;"></div>
<div style="left:776px;top:863px;width:16px;height:16px;background:#343434;"></div>
<div style="left:792px;top:863px;width:16px;height:16px;background:#343434;"></div>
<div style="left:808px;top:863px;width:16px;height:16px;background:#353535;"></div>
<div style="left:824px;top:863px;width:16px;height:16px;background:#313131;"></div>
<div style="left:760px;top:879px;width:123px;height:6px;background:#202020;"></div>
<div style="left:760px;top:879px;width:16px;height:6px;background:#3a3a3a;"></div>
<div style="left:776px;top:879px;width:16px;height:6px;background:#4c4c4c;"></div>
<div style="left:792px;top:879px;width:16px;height:6px;background:#4c4c4c;"></div>
<div style="left:808px;top:879px;width:16px;height:6px;background:#4d4d4d;"></div>
<div style="left:824px;top:879px;width:16px;height:6px;background:#454545;"></div>
<div style="left:27px;top:451px;line-height:16px;font-size:14.4px;color:#d8d9da;font-weight:normal;white-space:nowrap;">2018-08-21 15:20:50</div>
<div style="left:1009px;top:451px;line-height:16px;font-size:14.6px;color:#d8d9da;font-weight:normal;white-space:nowrap;letter-spacing:0.000px">Module-2 - - - New service 51 to output 2</div>
<div style="left:27px;top:486px;line-height:16px;font-size:14.4px;color:#d8d9da;font-weight:normal;white-space:nowrap;">2018-08-21 15:20:50</div>
<div style="left:1009px;top:486px;line-height:16px;font-size:14.6px;color:#d8d9da;font-weight:normal;white-space:nowrap;letter-spacing:0.000px">Module-5 - - - New service 51 to output 2</div>
<div style="left:27px;top:521px;line-height:16px;font-size:14.4px;color:#d8d9da;font-weight:normal;white-space:nowrap;">2018-08-21 15:20:48</div>
<div style="left:1009px;top:521px;line-height:16px;font-size:14.6px;color:#d8d9da;font-weight:normal;white-space:nowrap;letter-spacing:0.000px">Module-3 - - - New service 56 to output 1</div>
<div style="left:27px;top:556px;line-height:16px;font-size:14.4px;color:#d8d9da;font-weight:normal;white-space:nowrap;">2018-08-21 15:20:48</div>
<div style="left:1009px;top:556px;line-height:16px;font-size:14.6px;color:#d8d9da;font-weight:normal;white-space:nowrap;letter-spacing:0.000px">Module-2 - - - New service 51 to output 1</div>
<div style="left:27px;top:591px;line-height:16px;font-size:14.4px;color:#d8d9da;font-weight:normal;white-space:nowrap;">2018-08-21 15:20:48</div>
<div style="left:1009px;top:591px;line-height:16px;font-size:14.6px;color:#d8d9da;font-weight:normal;white-space:nowrap;letter-spacing:0.000px">Module-5 - - - New service 51 to output 1</div>
<div style="left:27px;top:626px;line-height:16px;font-size:14.4px;color:#d8d9da;font-weight:normal;white-space:nowrap;">2018-08-21 15:20:48</div>
<div style="left:1009px;top:626px;line-height:16px;font-size:14.6px;color:#d8d9da;font-weight:normal;white-space:nowrap;letter-spacing:-0.114px">Module-1 - - - [Cleared] Service missing (SID 56, output 3)</div>
<div style="left:27px;top:661px;line-height:16px;font-size:14.4px;color:#d8d9da;font-weight:normal;white-space:nowrap;">2018-08-21 15:20:48</div>
<div style="left:1009px;top:661px;line-height:16px;font-size:14.6px;color:#d8d9da;font-weight:normal;white-space:nowrap;letter-spacing:-0.114px">Module-1 - - - [Cleared] Service missing (SID 51, output 2)</div>
<div style="left:27px;top:696px;line-height:16px;font-size:14.4px;color:#d8d9da;font-weight:normal;white-space:nowrap;">2018-08-21 15:20:47</div>
<div style="left:1009px;top:696px;line-height:16px;font-size:14.6px;color:#d8d9da;font-weight:normal;white-space:nowrap;letter-spacing:-0.106px">Module-1 - - - [Cleared] Service missing (1:1.2 Tr2, #51 Radio-11)</div>
<div style="left:27px;top:731px;line-height:16px;font-size:14.4px;color:#d8d9da;font-weight:normal;white-space:nowrap;">2018-08-21 15:20:46</div>
<div style="left:1009px;top:731px;line-height:16px;font-size:14.6px;color:#d8d9da;font-weight:normal;white-space:nowrap;letter-spacing:-0.128px">Module-2 - - - [Cleared] Service missing (2:1.3 Tp3, #56 Radio-16)</div>
<div style="left:27px;top:766px;line-height:16px;font-size:14.4px;color:#d8d9da;font-weight:normal;white-space:nowrap;">2018-08-21 15:20:46</div>
<div style="left:1009px;top:766px;line-height:16px;font-size:14.6px;color:#d8d9da;font-weight:normal;white-space:nowrap;letter-spacing:-0.112px">Module-2 - - - [Cleared] Service missing (2:1.2 Tp2, #51 Radio-11)</div>
<div style="left:27px;top:801px;line-height:16px;font-size:14.4px;color:#d8d9da;font-weight:normal;white-space:nowrap;">2018-08-21 15:20:43</div>
<div style="left:1009px;top:801px;line-height:16px;font-size:14.6px;color:#d8d9da;font-weight:normal;white-space:nowrap;letter-spacing:-0.109px">Module-1 - - - [Cleared] Service missing (1:1.3 Tr3, #56 Radio-16)</div>
<div style="left:27px;top:836px;line-height:16px;font-size:14.4px;color:#d8d9da;font-weight:normal;white-space:nowrap;">2018-08-21 15:20:33</div>
<div style="left:1009px;top:836px;line-height:16px;font-size:14.6px;color:#d8d9da;font-weight:normal;white-space:nowrap;letter-spacing:0.000px">Module-3 - - - Remove service 56 from output 1</div>
<div style="left:27px;top:871px;line-height:16px;font-size:14.4px;color:#d8d9da;font-weight:normal;white-space:nowrap;">2018-08-21 15:20:33</div>
<div style="left:1009px;top:871px;line-height:16px;font-size:14.6px;color:#d8d9da;font-weight:normal;white-space:nowrap;letter-spacing:0.000px">Module-2 - - - Remove service 51 from output 2</div>
<div style="left:1892px;top:442px;width:8px;height:60px;background:#000;"></div>
<div style="left:1893px;top:443px;width:6px;height:58px;background:#3d3d3d;border-radius:1px"></div>
<div style="left:593.3px;width:600px;text-align:center;top:908px;line-height:14px;font-size:12px;color:#33b5e5;font-weight:bold;white-space:nowrap;">1</div>
<div style="left:624.5999999999999px;width:600px;text-align:center;top:908px;line-height:14px;font-size:12px;color:#d8d9da;font-weight:normal;white-space:nowrap;">2</div>
<div style="left:655.9px;width:600px;text-align:center;top:908px;line-height:14px;font-size:12px;color:#d8d9da;font-weight:normal;white-space:nowrap;">3</div>
<div style="left:687.1999999999999px;width:600px;text-align:center;top:908px;line-height:14px;font-size:12px;color:#d8d9da;font-weight:normal;white-space:nowrap;">4</div>
<div style="left:718.5px;width:600px;text-align:center;top:908px;line-height:14px;font-size:12px;color:#d8d9da;font-weight:normal;white-space:nowrap;">5</div>
</body></html>
